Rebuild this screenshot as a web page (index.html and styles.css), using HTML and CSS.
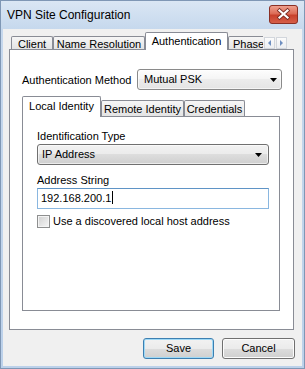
FILE: index.html
```html
<!DOCTYPE html>
<html>
<head>
    <meta name="viewport" content="width=device-width, initial-scale=1.0">
    <title>VPN Site Configuration</title>
    <link rel="stylesheet" href="styles.css">
</head>
<body>
    <div class="window">
        <!-- Title bar -->
        <div class="titlebar">
            <span class="title">VPN Site Configuration</span>
            <div class="close">
                <svg width="27" height="17" viewBox="0 0 27 17">
                    <path d="M9.5 4.5 L17.5 11.5 M17.5 4.5 L9.5 11.5" stroke="#7a2a20" stroke-width="3.8" stroke-linecap="square"/>
                    <path d="M9.5 4.5 L17.5 11.5 M17.5 4.5 L9.5 11.5" stroke="#ffffff" stroke-width="2.2" stroke-linecap="square"/>
                </svg>
            </div>
        </div>

        <div class="client">
            <!-- Main tabs -->
            <div class="tabstrip">
                <div class="tabs">
                    <div class="tab tab-client">Client</div>
                    <div class="tab tab-name">Name Resolution</div>
                    <div class="tab tab-auth active">Authentication</div>
                    <div class="tab tab-phase">Phase</div>
                </div>
                <div class="spin">
                    <div class="spin-btn">
                        <svg width="9" height="10" viewBox="0 0 9 10"><path d="M6 2 L3 5 L6 8 Z" fill="#6f8fc0"/></svg>
                    </div>
                    <div class="spin-btn">
                        <svg width="9" height="10" viewBox="0 0 9 10"><path d="M3 2 L6 5 L3 8 Z" fill="#6f8fc0"/></svg>
                    </div>
                </div>
            </div>

            <div class="panel">
                <div class="method-row">
                    <span class="label">Authentication Method</span>
                    <div class="combo combo-method">
                        <span>Mutual PSK</span>
                        <svg class="arrow" width="7" height="4" viewBox="0 0 7 4"><path d="M0 0 H7 L3.5 4 Z" fill="#000"/></svg>
                    </div>
                </div>

                <!-- Identity tabs -->
                <div class="subtabs">
                    <div class="subtab sub-local active">Local Identity</div>
                    <div class="subtab sub-remote">Remote Identity</div>
                    <div class="subtab sub-cred">Credentials</div>
                </div>

                <div class="subpanel">
                    <div class="field-label">Identification Type</div>
                    <div class="combo combo-type">
                        <span>IP Address</span>
                        <svg class="arrow" width="7" height="4" viewBox="0 0 7 4"><path d="M0 0 H7 L3.5 4 Z" fill="#000"/></svg>
                    </div>

                    <div class="field-label gap">Address String</div>
                    <div class="textbox">192.168.200.1<span class="caret"></span></div>

                    <label class="check-row">
                        <span class="checkbox"></span>
                        <span>Use a discovered local host address</span>
                    </label>
                </div>
            </div>

            <div class="buttons">
                <div class="btn default">Save</div>
                <div class="btn">Cancel</div>
            </div>
        </div>
    </div>
</body>
</html>
```

FILE: styles.css
```css
/* Reset */
body, html {
    margin: 0;
    padding: 0;
}

body {
    font-family: "Liberation Sans", Arial, sans-serif;
    font-size: 11px;
    color: #000;
    background: #fff;
}

/* Window frame (Windows 7 basic look) */
.window {
    width: 305px;
    height: 369px;
    box-sizing: border-box;
    border: 1px solid #7f97b5;
    padding: 0 2px 2px 2px;
    background: linear-gradient(#dae6f4, #c6d8ed 28px, #bcd1ea);
    display: flex;
    flex-direction: column;
}

.titlebar {
    height: 28px;
    display: flex;
    justify-content: space-between;
    align-items: flex-start;
    padding-left: 4px;
}

.title {
    font-size: 12px;
    line-height: 15px;
    margin-top: 7px;
}

.close {
    width: 29px;
    height: 19px;
    box-sizing: border-box;
    margin-top: 4px;
    margin-right: 4px;
    border: 1px solid #8a3025;
    border-radius: 3px;
    background-color: #d0503c;
    background-image: linear-gradient(#eea08e, #dc6c56 45%, #c8412c 55%, #d65e48);
    display: flex;
}

/* Client area */
.client {
    flex: 1;
    background: #f0f0f0;
    display: flex;
    flex-direction: column;
}

/* Main tab strip */
.tabstrip {
    display: flex;
    height: 18px;
    margin-top: 3px;
    margin-left: 8px;
    position: relative;
    z-index: 1;
}

.tabs {
    width: 252px;
    display: flex;
    align-items: flex-end;
    overflow: hidden;
}

.tab {
    flex: none;
    height: 13px;
    box-sizing: border-box;
    margin-bottom: 1px;
    border: 1px solid #898c95;
    border-bottom: none;
    border-radius: 2px 2px 0 0;
    background: linear-gradient(#f6f6f6, #e4e4e4);
    text-align: center;
    line-height: 11px;
    padding-top: 2px;
    white-space: nowrap;
}

.tab.active {
    height: 18px;
    margin-bottom: 0;
    background: #fff;
    padding-top: 2px;
    line-height: 13px;
}

.tab-client { width: 42px; }
.tab-name { width: 92px; }
.tab-auth { width: 83px; }
.tab-phase { width: 50px; text-align: left; padding-left: 4px; }

.spin {
    display: flex;
    gap: 1px;
    align-self: flex-end;
    margin-left: 1px;
    margin-bottom: 1px;
}

.spin-btn {
    width: 11px;
    height: 12px;
    box-sizing: border-box;
    border: 1px solid #d2d6dc;
    background: linear-gradient(#fbfbfb, #eceef1);
    display: flex;
    align-items: center;
    justify-content: center;
}

/* Outer tab panel */
.panel {
    width: 285px;
    height: 281px;
    box-sizing: border-box;
    margin-top: -1px;
    margin-left: 6px;
    border: 1px solid #898c95;
    background: #fff;
    padding: 19px 11px 0 12px;
}

.method-row {
    display: flex;
    align-items: center;
    justify-content: space-between;
}

/* Drop-down list */
.combo {
    height: 21px;
    box-sizing: border-box;
    border: 1px solid #707070;
    border-radius: 3px;
    background: linear-gradient(#f2f2f2, #ebebeb 50%, #dddddd 50%, #cfcfcf);
    box-shadow: inset 0 0 0 1px rgba(255, 255, 255, 0.6);
    display: flex;
    align-items: center;
    justify-content: space-between;
    padding: 0 7px 0 4px;
    line-height: 13px;
}

.combo-method {
    width: 145px;
    padding-left: 6px;
    padding-right: 4px;
    border-color: #8a8a8a;
    background: linear-gradient(#fdfdfd, #f4f4f4 50%, #ececec 50%, #e4e4e4);
}

.combo-type {
    width: 232px;
    padding-right: 6px;
}

.arrow {
    flex: none;
}

/* Identity tabs */
.subtabs {
    display: flex;
    align-items: flex-end;
    height: 21px;
    margin-top: 6px;
    position: relative;
    z-index: 1;
}

.subtab {
    flex: none;
    height: 16px;
    box-sizing: border-box;
    margin-bottom: 1px;
    border: 1px solid #898c95;
    border-bottom: none;
    border-radius: 2px 2px 0 0;
    background: linear-gradient(#f6f6f6, #e4e4e4);
    text-align: center;
    line-height: 13px;
    padding-top: 2px;
    white-space: nowrap;
}

.subtab.active {
    height: 21px;
    margin-bottom: 0;
    background: #fff;
    padding-top: 3px;
}

.sub-local { width: 79px; }
.sub-remote { width: 83px; }
.sub-cred { width: 61px; }

.subpanel {
    width: 258px;
    height: 195px;
    box-sizing: border-box;
    margin-top: -1px;
    border: 1px solid #898c95;
    padding: 13px 10px 0 14px;
}

.field-label {
    line-height: 13px;
    margin-bottom: 1px;
}

.field-label.gap {
    margin-top: 9px;
}

/* Text box with focus colours */
.textbox {
    width: 232px;
    height: 21px;
    box-sizing: border-box;
    border: 1px solid #8ab7e0;
    border-top-color: #5f94c6;
    background: #fff;
    padding-left: 3px;
    line-height: 19px;
    font-size: 11px;
}

.caret {
    display: inline-block;
    width: 1px;
    height: 13px;
    background: #000;
    vertical-align: -2px;
    margin-left: 1px;
}

.check-row {
    display: flex;
    align-items: center;
    margin-top: 6px;
    line-height: 13px;
}

.checkbox {
    width: 13px;
    height: 13px;
    box-sizing: border-box;
    border: 1px solid #8e8f8f;
    background: linear-gradient(135deg, #d0d0d0, #f6f6f6);
    box-shadow: inset 0 0 0 1px #f4f4f4;
    margin-right: 3px;
}

/* Dialog buttons */
.buttons {
    display: flex;
    justify-content: flex-end;
    gap: 8px;
    margin-top: 8px;
    margin-right: 7px;
}

.btn {
    width: 71px;
    height: 21px;
    box-sizing: border-box;
    border: 1px solid #707070;
    border-radius: 3px;
    background: linear-gradient(#f2f2f2, #ebebeb 50%, #dddddd 50%, #cfcfcf);
    box-shadow: inset 0 0 0 1px #fcfcfc;
    text-align: center;
    line-height: 19px;
}

.btn + .btn {
    width: 73px;
}

.btn.default {
    border-color: #3c7fb1;
    box-shadow: inset 0 0 0 1px #9fd9f6;
}
```
